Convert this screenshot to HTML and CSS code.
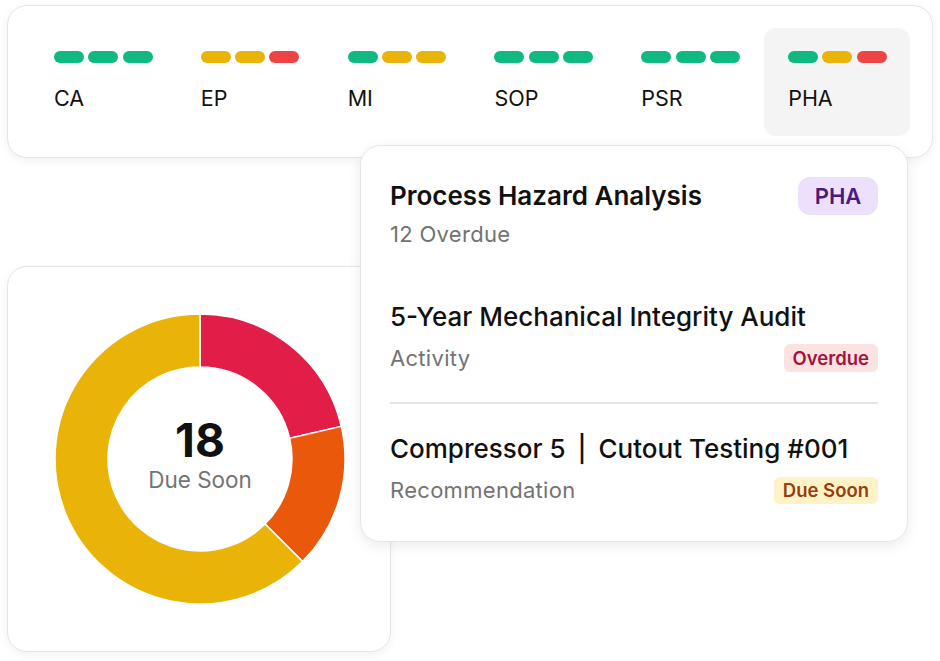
FILE: index.html
```html
<!DOCTYPE html>
<html lang="en">
<head>
<meta charset="utf-8">
<title>Compliance overview</title>
<link rel="stylesheet" href="styles.css">
</head>
<body>
<div class="stage">
  <section class="card status-card">
    <div class="status-grid">
      <div class="status-col">
        <div class="pills"><span class="pill green"></span><span class="pill green"></span><span class="pill green"></span></div>
        <div class="status-label">CA</div>
      </div>
      <div class="status-col">
        <div class="pills"><span class="pill yellow"></span><span class="pill yellow"></span><span class="pill red"></span></div>
        <div class="status-label">EP</div>
      </div>
      <div class="status-col">
        <div class="pills"><span class="pill green"></span><span class="pill yellow"></span><span class="pill yellow"></span></div>
        <div class="status-label">MI</div>
      </div>
      <div class="status-col">
        <div class="pills"><span class="pill green"></span><span class="pill green"></span><span class="pill green"></span></div>
        <div class="status-label">SOP</div>
      </div>
      <div class="status-col">
        <div class="pills"><span class="pill green"></span><span class="pill green"></span><span class="pill green"></span></div>
        <div class="status-label">PSR</div>
      </div>
      <div class="status-col active">
        <div class="pills"><span class="pill green"></span><span class="pill yellow"></span><span class="pill red"></span></div>
        <div class="status-label">PHA</div>
      </div>
    </div>
  </section>

  <section class="card donut-card">
    <div class="donut">
      <svg class="donut-svg" width="290" height="290" viewBox="0 0 290 290">
        <path class="seg seg-red" d="M145,0 A145,145 0 0 1 286.28,112.38 L234.64,124.30 A92,92 0 0 0 145,53 Z"/>
        <path class="seg seg-orange" d="M286.28,112.38 A145,145 0 0 1 247.53,247.53 L210.05,210.05 A92,92 0 0 0 234.64,124.30 Z"/>
        <path class="seg seg-yellow" d="M247.53,247.53 A145,145 0 1 1 145,0 L145,53 A92,92 0 1 0 210.05,210.05 Z"/>
      </svg>
      <div class="donut-center">
        <div class="donut-num">18</div>
        <div class="donut-cap">Due Soon</div>
      </div>
    </div>
  </section>

  <aside class="card popover">
    <div class="pop-head">
      <h2 class="pop-title">Process Hazard Analysis</h2>
      <span class="badge badge-pha">PHA</span>
    </div>
    <div class="pop-sub">12 Overdue</div>

    <div class="pop-item first">
      <div class="item-title">5-Year Mechanical Integrity Audit</div>
      <div class="item-row">
        <span class="item-type">Activity</span>
        <span class="badge badge-overdue">Overdue</span>
      </div>
    </div>
    <div class="pop-divider"></div>
    <div class="pop-item">
      <div class="item-title">Compressor 5<span class="pipe">|</span>Cutout Testing #001</div>
      <div class="item-row">
        <span class="item-type">Recommendation</span>
        <span class="badge badge-soon">Due Soon</span>
      </div>
    </div>
  </aside>
</div>
</body>
</html>
```

FILE: styles.css
```css
* { box-sizing: border-box; }

html, body {
  margin: 0;
  padding: 0;
  background: #ffffff;
}

body {
  font-family: Inter, "Noto Sans", "Liberation Sans", sans-serif;
  color: #111111;
  width: 940px;
  height: 661px;
  overflow: hidden;
}

.stage {
  position: relative;
  width: 940px;
  height: 661px;
  padding: 5px 0 0 7px;
}

.card {
  background: #ffffff;
  border: 1.5px solid #e6e6e6;
  border-radius: 20px;
  box-shadow: 0 3px 10px rgba(0, 0, 0, 0.06);
}

/* ---------- status card ---------- */
.status-card {
  width: 926px;
  height: 153px;
  padding: 21.5px 21.5px;
}

.status-grid {
  display: grid;
  grid-template-columns: repeat(6, minmax(0, 1fr));
  height: 100%;
}

.status-col {
  padding: 23.5px 0 0 24.5px;
  border-radius: 12px;
}

.status-col.active {
  background: #f4f4f4;
}

.pills {
  display: flex;
  gap: 4.3px;
}

.pill {
  width: 30px;
  height: 12px;
  border-radius: 6px;
}

.pill.green { background: #10b981; }
.pill.yellow { background: #eab308; }
.pill.red { background: #ef4444; }

.status-label {
  margin-top: 23px;
  font-size: 21.5px;
  line-height: 24px;
  color: #111111;
}

/* ---------- donut card ---------- */
.donut-card {
  margin-top: 108px;
  width: 384px;
  height: 386px;
  display: flex;
  align-items: center;
  justify-content: center;
}

.donut {
  display: grid;
  width: 290px;
  height: 290px;
  margin: 0 0 1px 2px;
}

.donut-svg, .donut-center {
  grid-area: 1 / 1;
}

.seg {
  stroke: #ffffff;
  stroke-width: 1.5;
  stroke-linejoin: miter;
}

.seg-red { fill: #e11d48; }
.seg-orange { fill: #ea580c; }
.seg-yellow { fill: #eab308; }

.donut-center {
  display: flex;
  flex-direction: column;
  align-items: center;
  justify-content: center;
  padding-bottom: 10px;
}

.donut-num {
  font-size: 46px;
  font-weight: 700;
  line-height: 50px;
  color: #111111;
}

.donut-cap {
  font-size: 22.5px;
  line-height: 26px;
  color: #737373;
  margin-top: 2px;
}

/* ---------- popover ---------- */
.popover {
  position: absolute;
  left: 360px;
  top: 145px;
  width: 548px;
  height: 397px;
  padding: 31px 29px 0 29px;
  box-shadow: 0 4px 14px rgba(0, 0, 0, 0.08);
}

.pop-head {
  display: flex;
  align-items: center;
  justify-content: space-between;
  height: 38px;
}

.pop-title {
  margin: 0;
  font-size: 26px;
  font-weight: 600;
  line-height: 32px;
  color: #111111;
}

.pop-sub {
  margin-top: 7px;
  font-size: 22px;
  letter-spacing: 0.3px;
  line-height: 24px;
  color: #737373;
}

.badge {
  display: inline-flex;
  align-items: center;
  justify-content: center;
  font-weight: 600;
}

.badge-pha {
  width: 80px;
  height: 38px;
  border-radius: 12px;
  background: #ede0fd;
  color: #4c1a7d;
  font-size: 22px;
}

.badge-overdue {
  height: 28px;
  padding: 0 9px;
  border-radius: 6px;
  background: #fde2e4;
  color: #a3143c;
  font-size: 18.5px;
}

.badge-soon {
  height: 27px;
  padding: 0 9px;
  border-radius: 6px;
  background: #fef3c7;
  color: #9a3c0e;
  font-size: 18.5px;
}

.pop-item.first {
  margin-top: 55px;
}

.pop-item {
  margin-top: 29px;
}

.item-title {
  font-size: 26px;
  font-weight: 500;
  line-height: 32px;
  color: #111111;
}

.pipe {
  margin: 0 12px;
}

.item-row {
  margin-top: 11px;
  display: flex;
  align-items: center;
  justify-content: space-between;
  height: 28px;
}

.item-type {
  font-size: 22px;
  letter-spacing: 0.3px;
  color: #737373;
}

.pop-divider {
  margin-top: 30px;
  height: 2px;
  background: #e5e5e5;
}
```
